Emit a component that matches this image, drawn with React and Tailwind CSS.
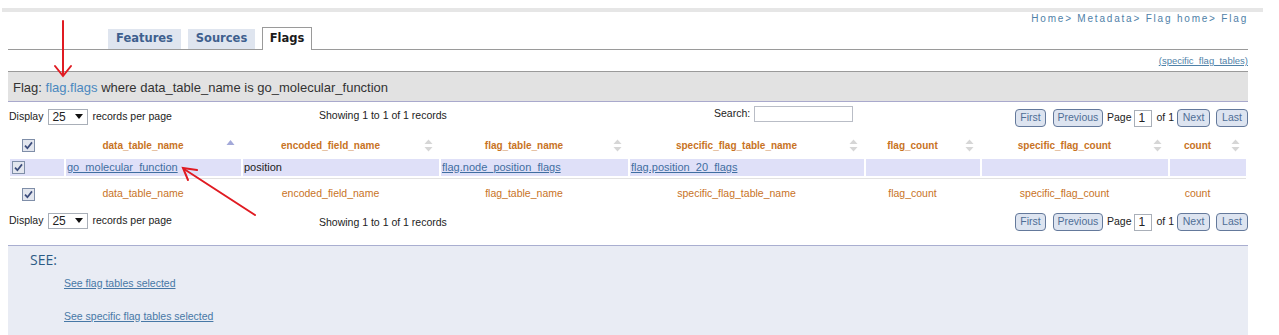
import React from "react";

const cols = [
  { name: "data_table_name", w: "w-[175px]", sorted: true },
  { name: "encoded_field_name", w: "w-[196px]" },
  { name: "flag_table_name", w: "w-[187px]" },
  { name: "specific_flag_table_name", w: "w-[234px]" },
  { name: "flag_count", w: "w-[114px]" },
  { name: "specific_flag_count", w: "w-[186px]" },
  { name: "count", w: "w-[76px]" },
];

const Check = () => (
  <span className="inline-flex w-[13px] h-[13px] items-center justify-center border border-[#7f8ea8] bg-[#e3e6ee]">
    <svg width="9" height="9" viewBox="0 0 9 9">
      <path d="M1 4.6 L3.4 7.2 L8 1.4" stroke="#3d4d7c" strokeWidth="1.7" fill="none" />
    </svg>
  </span>
);

const SortIcon = ({ sorted }) =>
  sorted ? (
    <svg width="9" height="13" viewBox="0 0 9 13">
      <path d="M4.5 1 L8.5 6 L0.5 6 Z" fill="#a3a9d9" />
    </svg>
  ) : (
    <svg width="9" height="13" viewBox="0 0 9 13">
      <path d="M4.5 0.5 L8.5 5 L0.5 5 Z" fill="#d6d6d6" />
      <path d="M4.5 12.5 L8.5 8 L0.5 8 Z" fill="#d6d6d6" />
    </svg>
  );

const PagerButton = ({ children, className }) => (
  <span
    className={
      "flex h-[18px] items-center justify-center rounded-[4px] border border-[#64799b] bg-[#dde4f0] text-[10.5px] text-[#4f6e96] " +
      className
    }
  >
    {children}
  </span>
);

const Pager = () => (
  <div className="flex items-center text-[10.5px] text-[#222]">
    <PagerButton className="w-[31px]">First</PagerButton>
    <PagerButton className="ml-[7px] w-[50px]">Previous</PagerButton>
    <span className="ml-[4px]">Page</span>
    <span className="ml-[3px] flex h-[17px] w-[18px] items-center border border-[#a9afb8] bg-white pl-[3px] text-[12px]">1</span>
    <span className="ml-[4px]">of 1</span>
    <PagerButton className="ml-[3px] w-[33px]">Next</PagerButton>
    <PagerButton className="ml-[6px] w-[32px]">Last</PagerButton>
  </div>
);

const Controls = ({ search, className }) => (
  <div className={"flex items-center text-[10.5px] text-[#222] " + className}>
    <div className="flex w-[311px] items-center pl-[1px]">
      <span>Display</span>
      <span className="ml-[5px] flex h-[16px] w-[40px] items-center justify-between border border-[#a9afb8] bg-white pl-[3px] pr-[4px] text-[12px] leading-none">
        25
        <svg width="8" height="5" viewBox="0 0 8 5">
          <path d="M0 0 L8 0 L4 5 Z" fill="#111" />
        </svg>
      </span>
      <span className="ml-[4px]">records per page</span>
    </div>
    <div className="w-[395px] self-start pt-[6px]">Showing 1 to 1 of 1 records</div>
    {search && (
      <div className="flex items-center self-start pt-[4px]">
        <span>Search:</span>
        <span className="ml-[4px] h-[16px] w-[99px] border border-[#b9bdc6] bg-white" />
      </div>
    )}
    <div className="ml-auto pt-[3px]">
      <Pager />
    </div>
  </div>
);

const App = () => {
  return (
    <div className="relative h-[335px] w-[1279px] overflow-hidden bg-white font-['Liberation_Sans',Arial,sans-serif] text-[#222]">
      {/* top strip */}
      <div className="pl-[2px] pt-[8px]">
        <div className="h-[4px] w-[1261px] bg-[#e6e6e6]" />
      </div>

      <div className="ml-[8px] w-[1240px]">
        {/* breadcrumb */}
        <div className="h-[13px] text-right text-[10px] leading-[13px] tracking-[1.8px] text-[#4f81a8]">
          Home&gt; Metadata&gt; Flag home&gt; Flag
        </div>

        {/* tabs */}
        <div className="mt-[2px] flex h-[23px] items-end gap-[7px] border-b border-[#9a9a9a] pl-[100px] font-['DejaVu_Sans',Verdana,sans-serif] text-[11.5px] font-bold">
          <div className="flex h-[20px] w-[73px] items-center justify-center bg-[#dfe5ef] text-[#3e5f8e]">Features</div>
          <div className="flex h-[20px] w-[67px] items-center justify-center bg-[#dfe5ef] text-[#3e5f8e]">Sources</div>
          <div className="-mb-px flex h-[23px] w-[50px] items-center justify-center border border-b-0 border-[#9a9a9a] bg-white text-[#1b1b1b]">
            Flags
          </div>
        </div>

        {/* specific flag tables link */}
        <div className="h-[21px] pt-[5px] text-right text-[9.5px] leading-[12px]">
          <span className="text-[#4f81a8] underline">(specific_flag_tables)</span>
        </div>

        {/* flag bar */}
        <div className="flex h-[31px] items-center border-t border-b border-t-[#9a9a9a] border-b-[#a9a9cc] bg-[#e2e2e2] pl-[5px] pt-[3px] text-[13px] text-[#333]">
          Flag:&nbsp;<span className="text-[#4a88bf]">flag.flags</span>&nbsp;where data_table_name is go_molecular_function
        </div>

        <Controls search className="h-[29px]" />

        {/* table */}
        <table className="w-[1240px] table-fixed border-separate border-spacing-[2px]">
          <colgroup>
            <col className="w-[54px]" />
            {cols.map((c) => (
              <col key={c.name} className={c.w} />
            ))}
          </colgroup>
          <thead>
            <tr className="h-[23px]">
              <th className="pl-[12px] text-left align-middle">
                <Check />
              </th>
              {cols.map((c) => (
                <th key={c.name} className="p-0 align-middle">
                  <div className="flex items-center">
                    <span className="flex-1 text-center text-[10px] font-bold text-[#c8731f]">{c.name}</span>
                    <span className="flex w-[21px] justify-center">
                      <SortIcon sorted={c.sorted} />
                    </span>
                  </div>
                </th>
              ))}
            </tr>
          </thead>
          <tbody>
            <tr className="h-[16px] bg-[#dfe0f8] text-[11px]">
              <td className="p-0 pl-[2px] align-middle leading-none">
                <Check />
              </td>
              <td className="p-0 px-[1px]">
                <span className="text-[#3f6ea1] underline">go_molecular_function</span>
              </td>
              <td className="p-0 px-[1px]">position</td>
              <td className="p-0 px-[1px]">
                <span className="text-[#3f6ea1] underline">flag.node_position_flags</span>
              </td>
              <td className="p-0 px-[1px]">
                <span className="text-[#3f6ea1] underline">flag.position_20_flags</span>
              </td>
              <td className="p-0" />
              <td className="p-0" />
              <td className="p-0" />
            </tr>
            <tr>
              <td colSpan={8} className="h-px bg-[#e2e2e2] p-0" />
            </tr>
          </tbody>
          <tfoot>
            <tr className="h-[26px]">
              <td className="pl-[12px] align-middle leading-none">
                <Check />
              </td>
              {cols.map((c) => (
                <td key={c.name} className="p-0 pr-[21px] text-center align-middle text-[10.5px] text-[#c8731f]">
                  {c.name}
                </td>
              ))}
            </tr>
          </tfoot>
        </table>

        <Controls className="h-[24px]" />

        {/* see panel */}
        <div className="mt-[12px] h-[95px] border-t border-[#a9aed0] bg-[#e9ecf4]">
          <div className="pl-[22px] pt-[5px] font-['Open_Sans',sans-serif] text-[14px] leading-[18px] text-[#2c5b85]">SEE:</div>
          <div className="pl-[56px] pt-[8px] text-[10.5px] leading-[12px]">
            <span className="text-[#4778a6] underline">See flag tables selected</span>
          </div>
          <div className="pl-[56px] pt-[21px] text-[10.5px] leading-[12px]">
            <span className="text-[#4778a6] underline">See specific flag tables selected</span>
          </div>
        </div>
      </div>

      {/* red annotation arrows */}
      <svg className="pointer-events-none absolute left-0 top-0" width="1279" height="335">
        <g stroke="#e01b22" strokeWidth="2" fill="none" strokeLinecap="round">
          <line x1="63" y1="21" x2="63" y2="75" />
          <polyline points="55,66 63,76 71,66" />
          <line x1="255" y1="215" x2="184" y2="169" />
          <polyline points="197,170 183,168 188,180" />
        </g>
      </svg>
    </div>
  );
};

export default App;
